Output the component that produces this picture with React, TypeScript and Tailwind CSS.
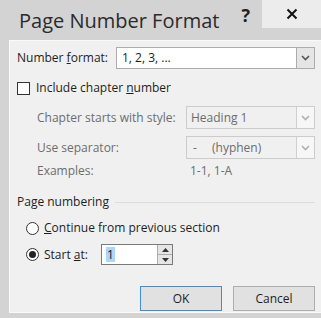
import React from 'react';

const font = { fontFamily: '"Open Sans", "Noto Sans", sans-serif' };

function Arrow({ disabled }: { disabled?: boolean }) {
  return (
    <div className={`w-[18px] h-full flex items-center justify-center border-l ${disabled ? 'border-[#cfcfcf] bg-[#f7f7f7]' : 'border-[#acacac] bg-[#e5e5e5]'}`}>
      <svg width="9" height="6" viewBox="0 0 9 6">
        <path d="M1 1 L4.5 4.5 L8 1" fill="none" stroke={disabled ? '#b0b0b0' : '#555'} strokeWidth="1.6" />
      </svg>
    </div>
  );
}

export default function App() {
  return (
    <div className="w-[321px] h-[318px] bg-[#d3d3d3] flex flex-col overflow-hidden text-[12px] text-[#1e1e1e]" style={font}>
      {/* title bar */}
      <div className="h-[40px] flex items-start shrink-0">
        <div className="pl-[19px] pt-[6px] text-[20px] text-[#2b2b2b] leading-[30px]">Page Number Format</div>
        <div className="ml-auto pt-[3px] pr-[12px] text-[18px] font-bold text-[#222] leading-[24px]">?</div>
        <div className="w-[59px] h-[28px] bg-[#ececec] flex items-center justify-center">
          <svg width="12" height="12" viewBox="0 0 12 12">
            <path d="M1.5 1.5 L10.5 10.5 M10.5 1.5 L1.5 10.5" stroke="#111" strokeWidth="2" />
          </svg>
        </div>
      </div>

      {/* body */}
      <div className="ml-[9px] h-[273px] bg-[#f0f0f0] border-l border-t border-b border-[#fafafa] pl-[7px] pr-[6px] flex flex-col">
        <div className="mt-[6px] h-[22px] flex items-center">
          <span className="w-[99px]">Number <u>f</u>ormat:</span>
          <div className="flex-1 h-full bg-white border border-[#acacac] flex items-center">
            <span className="flex-1 pl-[5px]">1, 2, 3, ...</span>
            <Arrow />
          </div>
        </div>

        <div className="mt-[12px] h-[14px] flex items-center">
          <div className="w-[13px] h-[13px] border border-[#333] bg-white" />
          <span className="ml-[6px]">Include chapter <u>n</u>umber</span>
        </div>

        <div className="pl-[20px] text-[#6d6d6d] flex flex-col">
          <div className="mt-[11px] h-[23px] flex items-center">
            <span className="w-[149px]">Chapter starts with style:</span>
            <div className="flex-1 h-full border border-[#cccccc] bg-[#f0f0f0] flex items-center">
              <span className="flex-1 pl-[4px]">Heading 1</span>
              <Arrow disabled />
            </div>
          </div>
          <div className="mt-[7px] h-[23px] flex items-center">
            <span className="w-[149px]">Use separator:</span>
            <div className="flex-1 h-full border border-[#cccccc] bg-[#f0f0f0] flex items-center">
              <span className="pl-[6px] w-[25px]">-</span>
              <span className="flex-1">(hyphen)</span>
              <Arrow disabled />
            </div>
          </div>
          <div className="mt-[4px] h-[16px] flex items-center">
            <span className="w-[153px]">Examples:</span>
            <span>1-1, 1-A</span>
          </div>
        </div>

        <div className="mt-[15px] h-[16px] flex items-center">
          <span>Page numbering</span>
          <div className="flex-1 ml-[6px] h-px bg-[#dcdcdc]" />
        </div>

        <div className="pl-[9px] flex flex-col">
          <div className="mt-[11px] h-[14px] flex items-center">
            <div className="w-[13px] h-[13px] rounded-full border border-[#333] bg-white" />
            <span className="ml-[5px]"><u>C</u>ontinue from previous section</span>
          </div>
          <div className="mt-[9px] h-[21px] flex items-center">
            <div className="w-[13px] h-[13px] rounded-full border border-[#333] bg-white flex items-center justify-center">
              <div className="w-[7px] h-[7px] rounded-full bg-[#222]" />
            </div>
            <span className="ml-[5px] w-[57px]">Start <u>a</u>t:</span>
            <div className="w-[72px] h-[21px] bg-white border border-[#7a7a7a] flex items-center">
              <span className="ml-[4px] bg-[#3399ff]/40 text-[#111] px-[1px] leading-[15px]">1</span>
              <div className="ml-auto w-[15px] h-full border-l border-[#acacac] flex flex-col">
                <div className="flex-1 bg-[#e5e5e5] border-b border-[#acacac] flex items-center justify-center">
                  <svg width="7" height="4" viewBox="0 0 7 4"><path d="M0 4 L3.5 0 L7 4 Z" fill="#333" /></svg>
                </div>
                <div className="flex-1 bg-[#e5e5e5] flex items-center justify-center">
                  <svg width="7" height="4" viewBox="0 0 7 4"><path d="M0 0 L3.5 4 L7 0 Z" fill="#333" /></svg>
                </div>
              </div>
            </div>
          </div>
        </div>

        <div className="mt-[21px] flex justify-end gap-[11px]">
          <button className="w-[82px] h-[25px] bg-[#e1e1e1] border border-[#3c8ed8] text-[#1e1e1e]">OK</button>
          <button className="w-[82px] h-[25px] bg-[#e1e1e1] border border-[#adadad] text-[#1e1e1e]">Cancel</button>
        </div>
      </div>
    </div>
  );
}
